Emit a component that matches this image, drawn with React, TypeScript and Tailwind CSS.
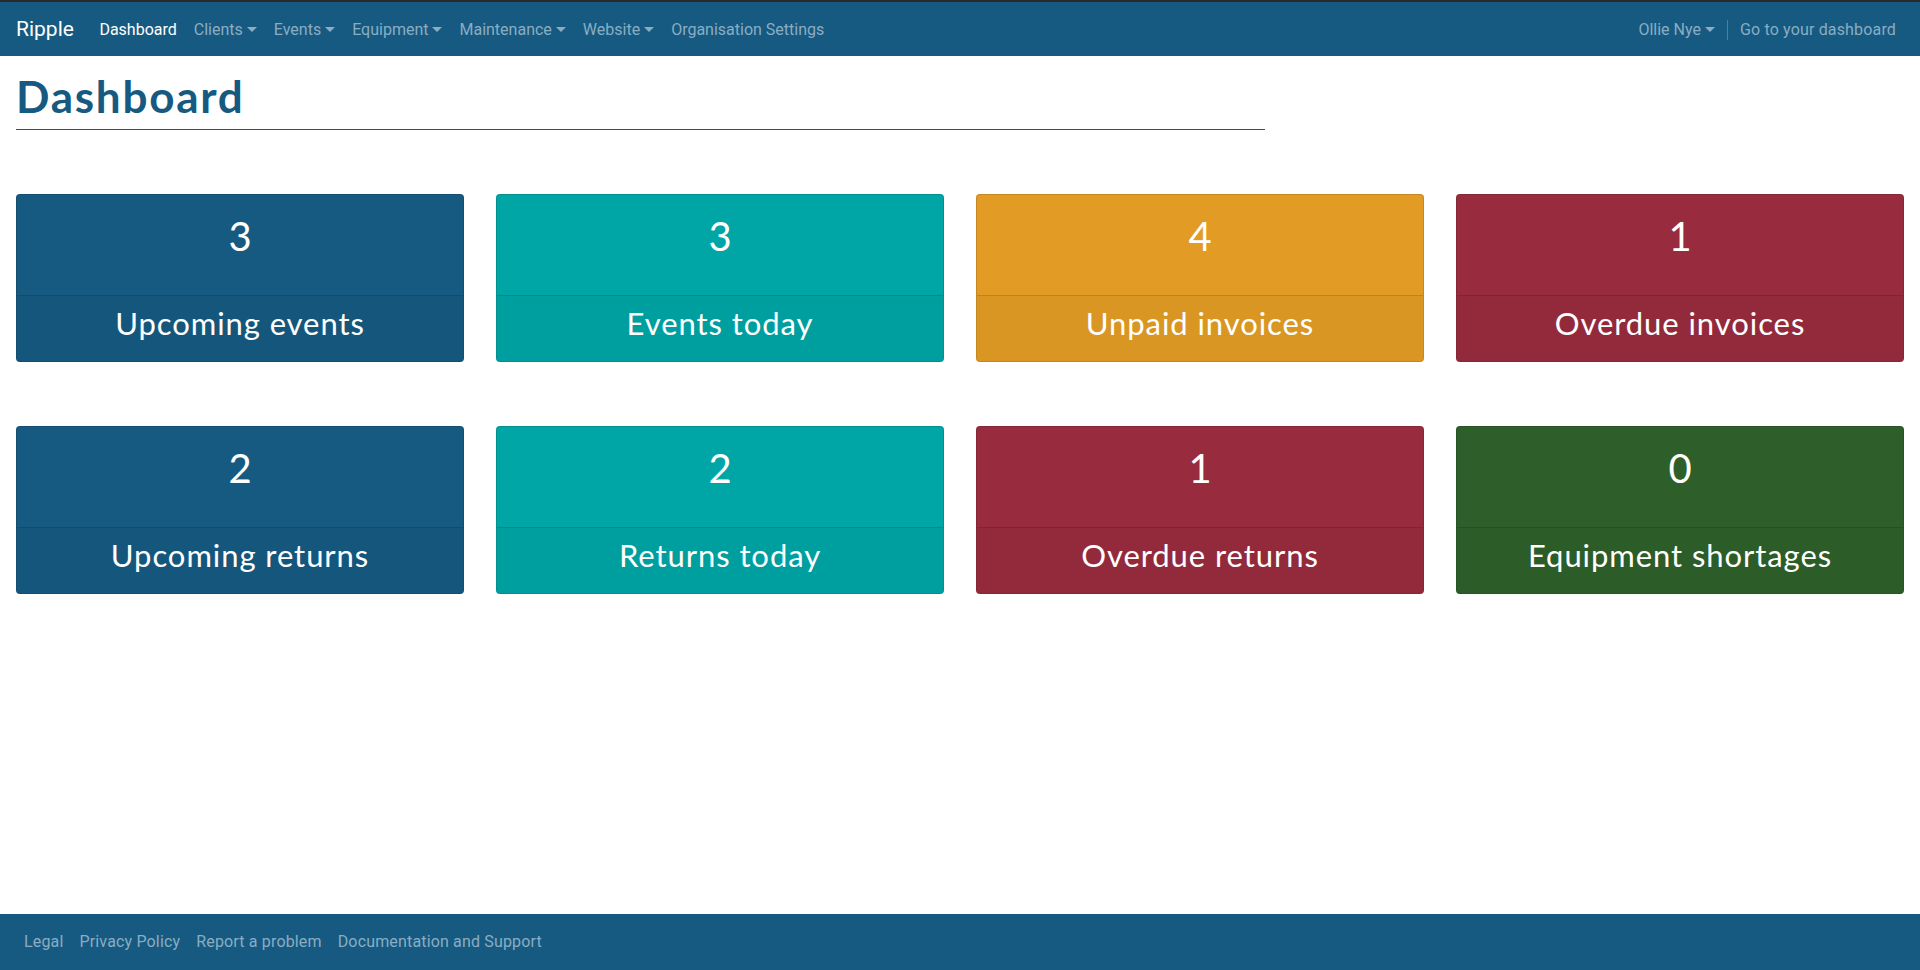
import React from "react";

const navItems = [
  { label: "Dashboard", active: true, dropdown: false },
  { label: "Clients", active: false, dropdown: true },
  { label: "Events", active: false, dropdown: true },
  { label: "Equipment", active: false, dropdown: true },
  { label: "Maintenance", active: false, dropdown: true },
  { label: "Website", active: false, dropdown: true },
  { label: "Organisation Settings", active: false, dropdown: false },
];

const stats = [
  { value: 3, label: "Upcoming events", bg: "bg-[#165a81]" },
  { value: 3, label: "Events today", bg: "bg-[#00a5a5]" },
  { value: 4, label: "Unpaid invoices", bg: "bg-[#e29b24]" },
  { value: 1, label: "Overdue invoices", bg: "bg-[#982c3e]" },
  { value: 2, label: "Upcoming returns", bg: "bg-[#165a81]" },
  { value: 2, label: "Returns today", bg: "bg-[#00a5a5]" },
  { value: 1, label: "Overdue returns", bg: "bg-[#982c3e]" },
  { value: 0, label: "Equipment shortages", bg: "bg-[#2e5f2a]" },
];

const footerLinks = ["Legal", "Privacy Policy", "Report a problem", "Documentation and Support"];

function Caret() {
  return (
    <span className="ml-[4px] inline-block h-0 w-0 border-x-[5px] border-t-[5px] border-x-transparent border-t-current align-[3px]" />
  );
}

function StatCard({ value, label, bg }: { value: number; label: string; bg: string }) {
  return (
    <div className={`${bg} rounded border border-black/[0.125] text-white text-center overflow-hidden`}>
      <div className="h-[100px] pt-[17px] text-[40px] leading-[48px]">{value}</div>
      <div className="h-[66px] pt-[9px] border-t border-black/[0.125] bg-black/[0.03] text-[31px] leading-[36px] tracking-[0.03em]">
        {label}
      </div>
    </div>
  );
}

export default function App() {
  return (
    <div className="min-h-screen flex flex-col bg-white">
      <nav className="h-[56px] border-t-2 border-[#2a2a2a] bg-[#165a81] flex items-center justify-between px-4 pt-[2px] font-['Roboto',sans-serif]">
        <div className="flex items-center">
          <span className="text-white text-[21px] mr-[17px]">Ripple</span>
          <div className="flex items-center">
            {navItems.map((item) => (
              <a
                key={item.label}
                className={`px-[8.5px] text-[16px] ${item.active ? "text-white" : "text-[#8aadc1]"}`}
              >
                {item.label}
                {item.dropdown && <Caret />}
              </a>
            ))}
          </div>
        </div>
        <div className="flex items-center text-[16px] text-[#8aadc1]">
          <a className="px-2">
            Ollie Nye
            <Caret />
          </a>
          <span className="mx-[4px] h-[20px] w-px bg-[#4f7fa0]" />
          <a className="px-2 tracking-[0.01em]">Go to your dashboard</a>
        </div>
      </nav>

      <main className="flex-1 px-4 font-['Lato',sans-serif]">
        <h1 className="mt-[14px] w-[1249px] border-b border-[#165a81] pb-[7px] text-[44px] leading-[52px] font-bold tracking-[0.04em] text-[#165a81]">
          Dashboard
        </h1>
        <div className="mt-[64px] grid grid-cols-4 gap-x-8 gap-y-16">
          {stats.map((s, i) => (
            <StatCard key={i} value={s.value} label={s.label} bg={s.bg} />
          ))}
        </div>
      </main>

      <footer className="h-[56px] bg-[#165a81] flex items-center gap-[16px] px-[24px] font-['Roboto',sans-serif] text-[16px] tracking-[0.01em] text-[#8aadc1]">
        {footerLinks.map((l) => (
          <a key={l}>{l}</a>
        ))}
      </footer>
    </div>
  );
}
